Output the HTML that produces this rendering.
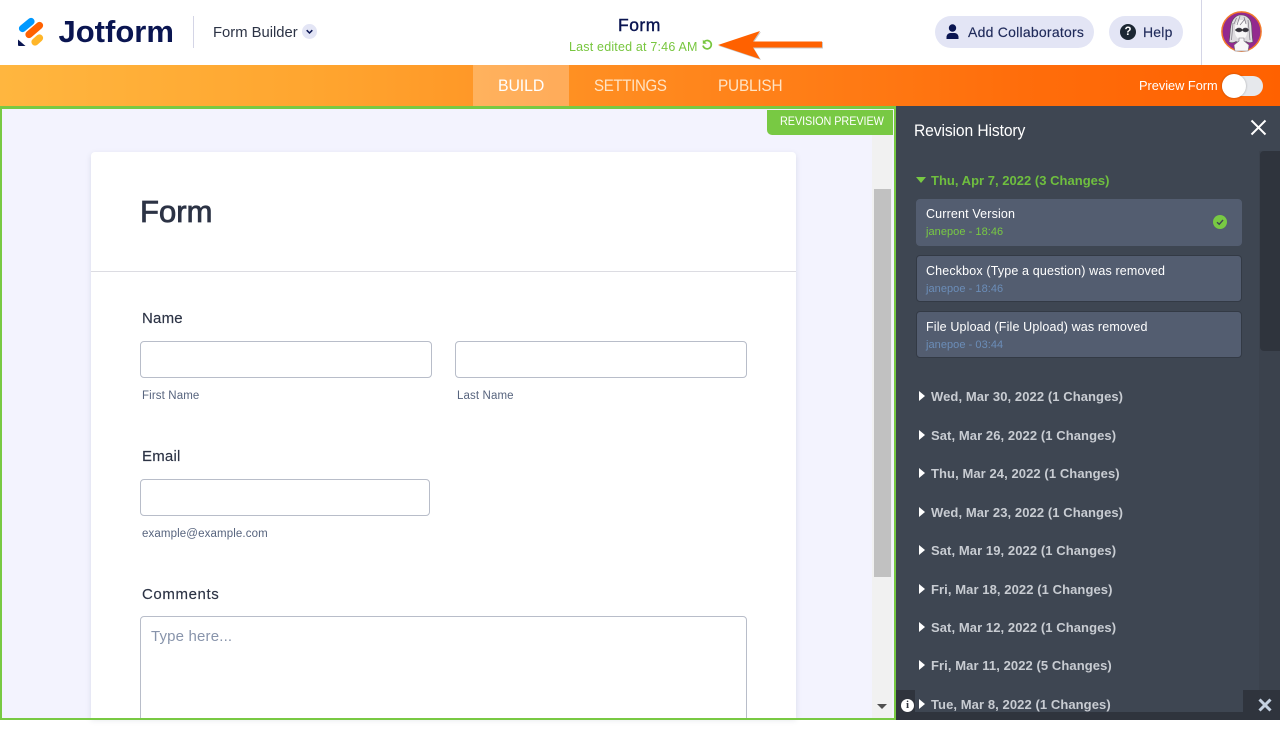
<!DOCTYPE html>
<html><head><meta charset="utf-8"><title>Form</title>
<style>
html,body{margin:0;padding:0;width:1280px;height:720px;overflow:hidden;background:#fff;font-family:"Liberation Sans",sans-serif}
div,span,svg{position:absolute;box-sizing:border-box}
.t{white-space:nowrap;line-height:20px;height:20px;transform-origin:0 50%}
.in{border:1px solid #b8bdc9;border-radius:4px;background:#fff}
.lb{font-size:15px;color:#2c3345;letter-spacing:.2px;-webkit-text-stroke:.15px #2c3345}
.sub{font-size:11.5px;color:#57647e;letter-spacing:.12px}
.c{left:916px;width:326px;height:47px;background:#535d70;border:1px solid #333a45;border-radius:4px}
.ct{left:926px;font-size:12.5px;color:#fff;letter-spacing:.15px}
.cs{left:926px;font-size:11px;color:#6b8db8;letter-spacing:.05px}
.d{left:931px;font-size:13px;font-weight:bold;color:#c8ccd2;letter-spacing:.08px}
.tr{left:919px;width:0;height:0;border-left:6px solid #fff;border-top:5.5px solid transparent;border-bottom:5.5px solid transparent}
</style></head><body>

<!-- header -->
<svg style="left:0;top:0" width="50" height="60" viewBox="0 0 50 60">
<line x1="22.5" y1="28.5" x2="31" y2="21.5" stroke="#0099ff" stroke-width="7.2" stroke-linecap="round"/>
<line x1="29" y1="34.5" x2="39.500" y2="25.500" stroke="#ff6100" stroke-width="7.2" stroke-linecap="round"/>
<line x1="35" y1="42" x2="39.500" y2="38" stroke="#ffb629" stroke-width="7.2" stroke-linecap="round"/>
<path d="M18 39.500V45a1 1 0 0 0 1 1h6.500z" fill="#0a1551"/>
</svg>
<div class="t" style="left:58.500px;top:22px;font-size:31px;font-weight:bold;color:#0a1551;letter-spacing:0">Jotform</div>
<div style="left:193px;top:16px;width:1px;height:32px;background:#d4d5e6"></div>
<div class="t" style="left:213px;top:23px;font-size:14.8px;color:#2c3345">Form Builder</div>
<div style="left:302px;top:24px;width:15px;height:15px;border-radius:50%;background:#e3e5f5"></div>
<svg style="left:302px;top:24px" width="15" height="15" viewBox="0 0 15 15"><path d="M4.700 6.200 7.500 9l2.800-2.800" fill="none" stroke="#0a1551" stroke-width="1.500"/></svg>

<div class="t" style="left:618px;top:15px;font-size:17.5px;color:#0a1551;letter-spacing:.5px;-webkit-text-stroke:.4px #0a1551">Form</div>
<div class="t" style="left:569px;top:36.500px;font-size:12.5px;color:#78c63f;letter-spacing:.19px">Last edited at 7:46 AM</div>
<svg style="left:701px;top:39px" width="13" height="13" viewBox="0 0 13 13"><path d="M3.200 2.600A4.200 4.200 0 1 1 2 6.600" fill="none" stroke="#78c63f" stroke-width="1.700"/><path d="M1.800 .8v4h4z" fill="#78c63f"/></svg>
<svg style="left:715px;top:28px" width="112" height="34" viewBox="715 28 112 34">
<path d="M719 46 761 32 754 42H823V48.500H754L761 60z" fill="#888" opacity=".45"/>
<path d="M718 45 760 31 753 41.500H822V47.500H753L760 59z" fill="#ff6100"/>
</svg>

<div style="left:935px;top:16px;width:159px;height:32px;border-radius:16px;background:#e3e5f5"></div>
<svg style="left:945px;top:23px" width="15" height="18" viewBox="0 0 15 18"><circle cx="7.500" cy="5" r="3.700" fill="#0a1551"/><path d="M1.500 16v-2.500A4 4 0 0 1 5.500 10h4a4 4 0 0 1 4 3.500V16z" fill="#0a1551"/></svg>
<div class="t" style="left:968px;top:22px;font-size:14px;color:#1f2a5a;letter-spacing:.24px;-webkit-text-stroke:.15px #1f2a5a">Add Collaborators</div>
<div style="left:1120px;top:24px;width:16px;height:16px;z-index:2;border-radius:50%;background:#1c2733;color:#fff;font-size:11.500px;font-weight:bold;line-height:16px;text-align:center">?</div>
<div style="left:1109px;top:16px;width:74px;height:32px;border-radius:16px;background:#e3e5f5"></div>
<div class="t" style="left:1143px;top:22px;font-size:14px;color:#1f2a5a;letter-spacing:.2px;-webkit-text-stroke:.15px #1f2a5a">Help</div>
<div style="left:1201px;top:0;width:1px;height:65px;background:#d4d5e6"></div>
<svg style="left:1221px;top:11px" width="41" height="41" viewBox="0 0 41 41">
<circle cx="20.500" cy="20.500" r="19.600" fill="#93298e" stroke="#f2792b" stroke-width="1.500"/>
<path d="M8 31C9 26 9 19 10 14 11 8 15 4 20 4c6 0 10 4 10.500 10 .5 6 .5 12 1.500 17-3 1-5 1-7-.5-1 1-9 1-10 0-2 1.500-5 1.500-7 .5z" fill="#dedcdf" stroke="#55505a" stroke-width=".6"/>
<path d="M14 16c0-4 3-7 7-7 3 0 5 3 5 7v6c-.500 4-3 7-5.500 7S14.500 26 14 22z" fill="#f8f7f8"/>
<path d="M12 12 10.500 29M15.500 7 13 13M19 5l-3 9M23 6l2 7M27 9l2 20M24 8l-5 6" stroke="#7d7883" stroke-width=".7" fill="none"/>
<ellipse cx="18" cy="19" rx="3.400" ry="2.200" fill="#45424c"/><ellipse cx="24.500" cy="19" rx="3.200" ry="2.200" fill="#45424c"/>
<path d="M14 19h13" stroke="#222" stroke-width=".9"/>
<path d="M18 27h5v3l5 4-1 6H14l-1-6 5-4z" fill="#f8f7f8" stroke="#77727d" stroke-width=".6"/>
</svg>

<!-- nav -->
<div style="left:0;top:65px;width:1280px;height:41px;background:linear-gradient(90deg,#ffb63f 0,#ffa52f 25%,#ff8a1f 50%,#ff6d0b 80%,#ff6100 100%)"></div>
<div style="left:473px;top:65px;width:96px;height:41px;background:rgba(255,255,255,.25)"></div>
<div class="t" style="left:498px;top:76px;font-size:16.500px;color:#fff;letter-spacing:-.1px;transform:scaleX(.96)">BUILD</div>
<div class="t" style="left:594px;top:76px;font-size:16.500px;color:#ffe3c4;letter-spacing:-.35px;transform:scaleX(.91)">SETTINGS</div>
<div class="t" style="left:718px;top:76px;font-size:16.500px;color:#ffe3c4;letter-spacing:-.2px;transform:scaleX(.93)">PUBLISH</div>
<div class="t" style="left:1139px;top:76px;font-size:12.800px;color:#fff;letter-spacing:-.02px">Preview Form</div>
<div style="left:1222px;top:76px;width:41px;height:20px;border-radius:10px;background:#e6e8ec"></div>
<div style="left:1222px;top:74px;width:24px;height:24px;border-radius:50%;background:#fff;box-shadow:0 0 2px rgba(0,0,0,.3)"></div>

<!-- preview -->
<div style="left:0;top:106px;width:896px;height:614px;background:#f3f3fe;border:2px solid #78c943;border-top-width:3px;overflow:hidden"></div>
<div style="left:872px;top:109px;width:20px;height:609px;background:#f1f1f1"></div>
<div style="left:874px;top:189px;width:17px;height:388px;background:#c1c1c1"></div>
<div style="left:877px;top:704px;width:0;height:0;border-left:5px solid transparent;border-right:5px solid transparent;border-top:5px solid #505050"></div>
<div style="left:767px;top:110px;width:126px;height:25px;background:#78c943;border-bottom-left-radius:5px"></div>
<div class="t" style="left:780px;top:111px;font-size:12px;color:#fff;letter-spacing:-.08px;transform:scaleX(.905)">REVISION PREVIEW</div>

<!-- card -->
<div style="left:91px;top:152px;width:705px;height:566px;background:#fff;border-radius:4px 4px 0 0;box-shadow:0 2px 6px rgba(87,100,126,.16)"></div>
<div style="left:91px;top:271px;width:705px;height:1px;background:#dcdce2"></div>
<div class="t" style="left:140px;top:201.500px;font-size:31px;color:#2c3345;letter-spacing:.05px;-webkit-text-stroke:.8px #2c3345">Form</div>
<div class="t lb" style="left:142px;top:309px">Name</div>
<div class="in" style="left:140px;top:341px;width:292px;height:37px"></div>
<div class="in" style="left:455px;top:341px;width:292px;height:37px"></div>
<div class="t sub" style="left:142px;top:386px">First Name</div>
<div class="t sub" style="left:457px;top:386px">Last Name</div>
<div class="t lb" style="left:142px;top:447px">Email</div>
<div class="in" style="left:140px;top:479px;width:290px;height:37px"></div>
<div class="t sub" style="left:142px;top:524px">example@example.com</div>
<div class="t lb" style="left:142px;top:585px;letter-spacing:.6px">Comments</div>
<div class="in" style="left:140px;top:616px;width:607px;height:120px;clip-path:inset(0 0 16px 0)"></div>
<div class="t" style="left:151px;top:627px;font-size:15px;color:#8894ab;letter-spacing:.17px">Type here...</div>
<div style="left:0;top:718px;width:896px;height:2px;background:#78c943"></div>

<!-- revision panel -->
<div style="left:896px;top:106px;width:384px;height:614px;background:#3e4652"></div>
<div class="t" style="left:914px;top:120.500px;font-size:17px;color:#fff;letter-spacing:-.12px;transform:scaleX(.92)">Revision History</div>
<svg style="left:1250px;top:119px" width="17" height="17" viewBox="0 0 17 17"><path d="M1.500 1.500 15.500 15.500M15.500 1.500 1.500 15.500" stroke="#fff" stroke-width="2"/></svg>
<div style="left:1259px;top:151px;width:21px;height:569px;background:#3b424d"></div>
<div style="left:1260px;top:151px;width:20px;height:200px;background:#2f343d;border-radius:4px 0 0 4px"></div>

<div style="left:915.500px;top:177px;width:0;height:0;border-left:5.500px solid transparent;border-right:5.500px solid transparent;border-top:6.500px solid #78c943"></div>
<div class="t d" style="top:171px;color:#6fbf3f;letter-spacing:.02px">Thu, Apr 7, 2022 (3 Changes)</div>

<div class="c" style="top:199px;border-color:#535d70"></div>
<div class="t ct" style="top:204px">Current Version</div>
<div class="t cs" style="top:222px;color:#78c943">janepoe - 18:46</div>
<div style="left:1213px;top:215px;width:14px;height:14px;border-radius:50%;background:#78c943"></div>
<svg style="left:1213px;top:215px" width="14" height="14" viewBox="0 0 14 14"><path d="M4 7.200 6.200 9.300 10 5" fill="none" stroke="#3e4652" stroke-width="1.400"/></svg>

<div class="c" style="top:255px"></div>
<div class="t ct" style="top:261px">Checkbox (Type a question) was removed</div>
<div class="t cs" style="top:279px">janepoe - 18:46</div>
<div class="c" style="top:311px"></div>
<div class="t ct" style="top:317px">File Upload (File Upload) was removed</div>
<div class="t cs" style="top:335px">janepoe - 03:44</div>

<div class="tr" style="top:390.500px"></div><div class="t d" style="top:387px">Wed, Mar 30, 2022 (1 Changes)</div>
<div class="tr" style="top:429.500px"></div><div class="t d" style="top:426px">Sat, Mar 26, 2022 (1 Changes)</div>
<div class="tr" style="top:467.500px"></div><div class="t d" style="top:464px">Thu, Mar 24, 2022 (1 Changes)</div>
<div class="tr" style="top:506.500px"></div><div class="t d" style="top:503px">Wed, Mar 23, 2022 (1 Changes)</div>
<div class="tr" style="top:544.500px"></div><div class="t d" style="top:541px">Sat, Mar 19, 2022 (1 Changes)</div>
<div class="tr" style="top:583.500px"></div><div class="t d" style="top:580px">Fri, Mar 18, 2022 (1 Changes)</div>
<div class="tr" style="top:621.500px"></div><div class="t d" style="top:618px">Sat, Mar 12, 2022 (1 Changes)</div>
<div class="tr" style="top:659.500px"></div><div class="t d" style="top:656px">Fri, Mar 11, 2022 (5 Changes)</div>
<div class="tr" style="top:698.500px"></div><div class="t d" style="top:695px">Tue, Mar 8, 2022 (1 Changes)</div>

<div style="left:896px;top:712px;width:384px;height:8px;background:#2f343d"></div>
<div style="left:896px;top:690px;width:19px;height:30px;background:#2f343d"></div>
<div style="left:1243px;top:690px;width:37px;height:30px;background:#2f343d"></div>
<div style="left:901px;top:699px;width:13px;height:13px;border-radius:50%;background:#fff"></div>
<div style="left:901px;top:699px;width:13px;height:13px;font:bold 11px/13px 'Liberation Serif',serif;color:#2f343d;text-align:center">i</div>
<svg style="left:1258px;top:698px" width="14" height="14" viewBox="0 0 14 14"><path d="M1.500 1.500 12.500 12.500M12.500 1.500 1.500 12.500" stroke="#c5d2e2" stroke-width="3"/></svg>
</body></html>
